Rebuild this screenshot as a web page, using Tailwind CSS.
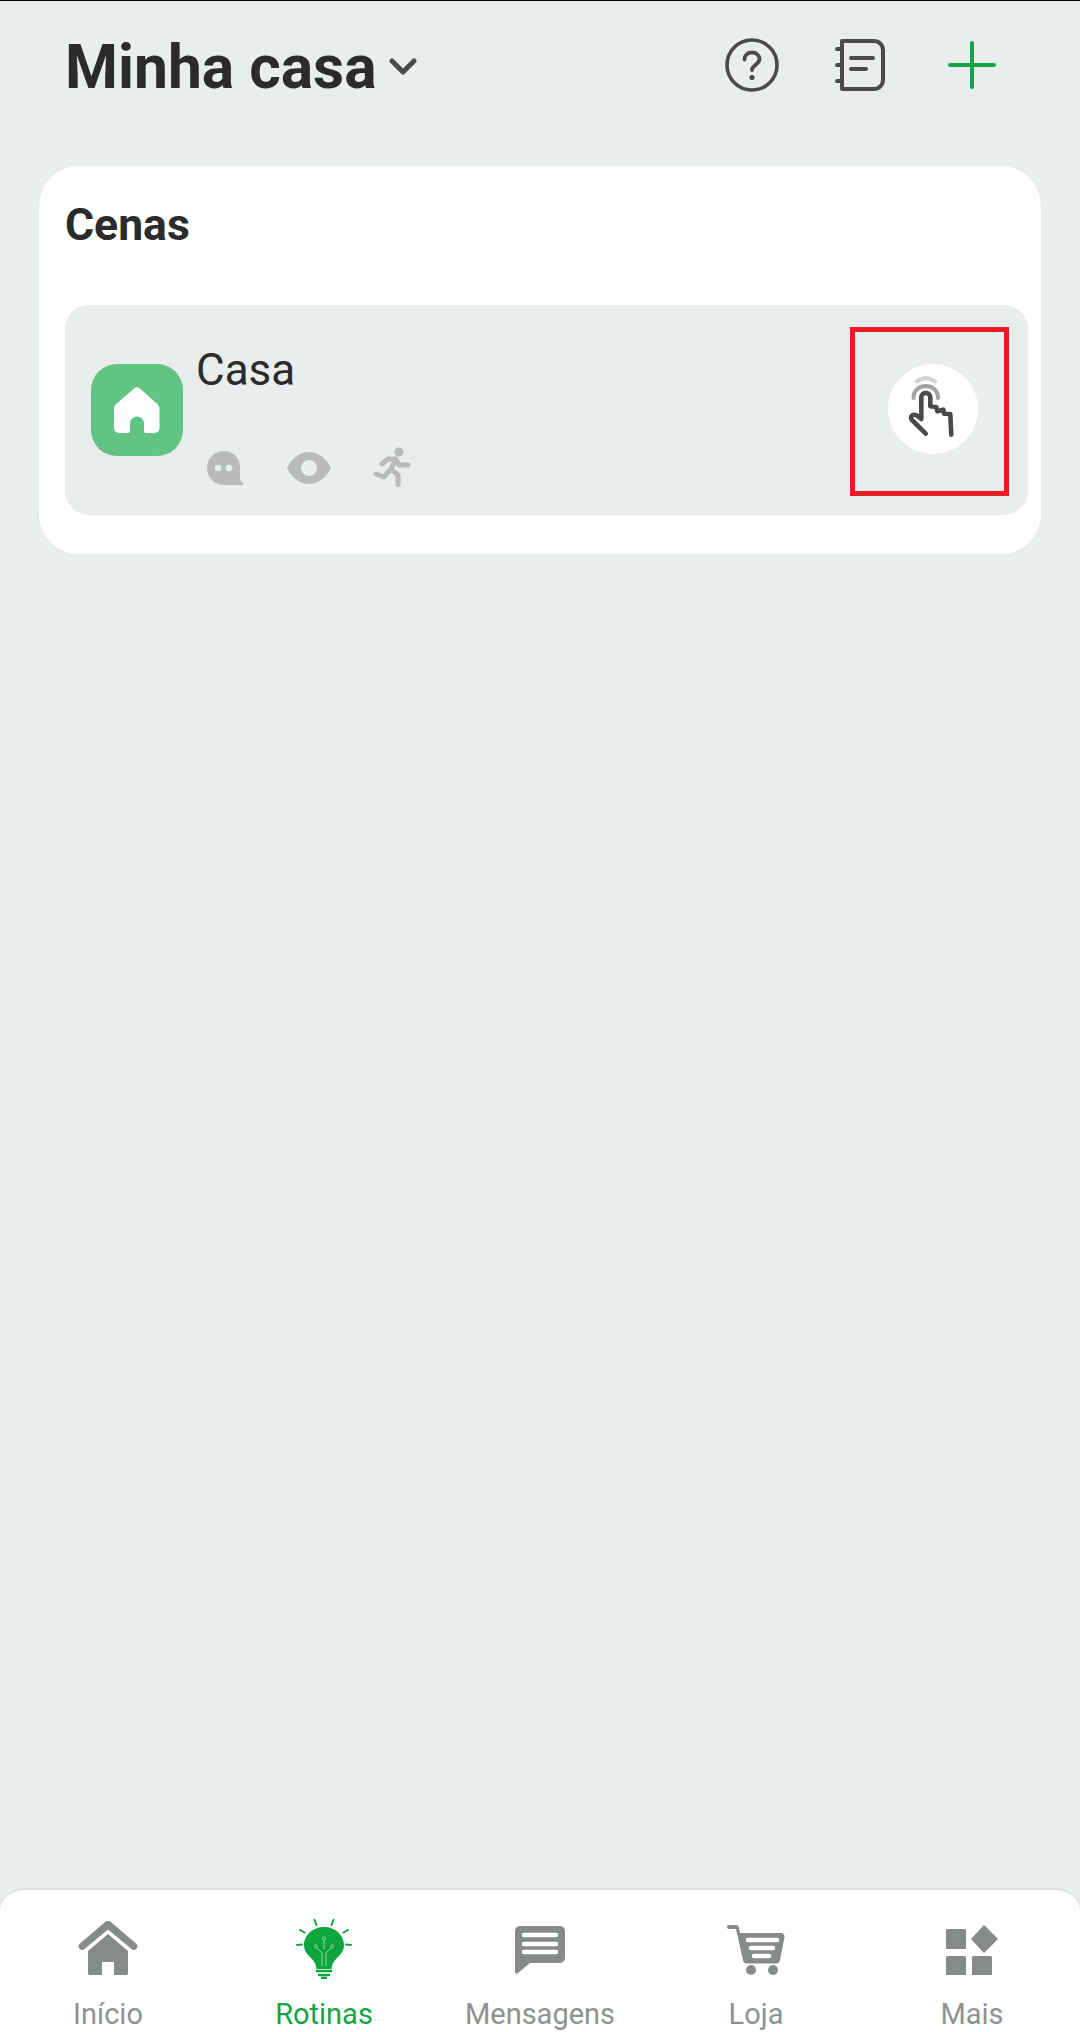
<!DOCTYPE html>
<html lang="pt">
<head>
  <meta charset="UTF-8">
  <title>Minha casa</title>
  <script src="https://cdn.jsdelivr.net/npm/@tailwindcss/browser@4"></script>
</head>
<body class="bg-[#e9edee] font-[Roboto,sans-serif] text-[#2b2b2b]">
  <div class="w-[1080px] h-[2032px] flex flex-col border-t border-black overflow-hidden">

    <!-- header -->
    <header class="h-[127px] shrink-0 flex items-center pl-[65px]">
      <h1 class="text-[60.5px] leading-[70px] font-bold pt-[6px]">Minha casa</h1>
      <svg class="ml-[12px] mt-[5px]" width="28" height="18" viewBox="0 0 28 18" fill="none" stroke="#484a4a" stroke-width="5" stroke-linecap="round" stroke-linejoin="round"><path d="M3 3l11 11L25 3"/></svg>
      <div class="ml-auto flex items-center">
        <svg class="mr-[55px]" width="56" height="56" viewBox="0 0 56 56" fill="none" stroke="#4a4a4a" stroke-width="3.6" stroke-linecap="round">
          <circle cx="28" cy="28" r="25"/>
          <path d="M20.5 22.5c0-4.2 3.3-7 7.5-7s7.5 2.8 7.5 6.600c0 5.600-7.500 5.900-7.500 11" stroke-width="3.8"/>
          <circle cx="28" cy="40.5" r="2.6" fill="#4a4a4a" stroke="none"/>
        </svg>
        <svg class="mr-[63px]" width="50" height="52" viewBox="0 0 50 52" fill="none" stroke="#4a4a4a" stroke-width="4" stroke-linecap="round" stroke-linejoin="round">
          <path d="M7 2h32a9 9 0 0 1 9 9v30a9 9 0 0 1-9 9H7z"/>
          <path d="M2 10h5M2 26h5M2 42h5M16 19h22M16 30h15"/>
        </svg>
        <svg class="mr-[84px]" width="48" height="48" viewBox="0 0 48 48" fill="none" stroke="#16a346" stroke-width="4" stroke-linecap="round"><path d="M24 2v44M2 24h44"/></svg>
      </div>
    </header>

    <!-- scenes card -->
    <section class="mt-[38px] ml-[39px] w-[1002px] h-[388px] bg-white rounded-[40px] pt-[34px] pl-[26px] pr-[13px] shrink-0">
      <h2 class="text-[44.5px] leading-[50px] font-bold">Cenas</h2>
      <div class="mt-[55px] h-[210px] bg-[#e9edee] rounded-[24px] flex items-center relative pl-[26px]">
        <div class="w-[92px] h-[92px] rounded-[26px] bg-[#62c484] flex items-center justify-center shrink-0 mt-[-1px]">
          <svg width="46" height="46" viewBox="0 0 46 46" fill="#fff"><path d="M20 1.600a4.400 4.400 0 0 1 6 0l17.500 15.600a6 6 0 0 1 2 4.500V41a5 5 0 0 1-5 5H32a2 2 0 0 1-2-2v-7.500a7 7 0 0 0-14 0V44a2 2 0 0 1-2 2H5a5 5 0 0 1-5-5V21.700a6 6 0 0 1 2-4.500z"/></svg>
        </div>
        <div class="ml-[13px] self-start pt-[39px]">
          <p class="text-[44px] leading-[52px] text-[#2b2b2b]">Casa</p>
          <div class="flex items-center mt-[53px] ml-[11px]">
            <svg width="36" height="34" viewBox="0 0 36 34" fill="#b9baba"><path d="M17 0c9.500 0 16 7 16 16v11c0 2 1 3.500 3 5 .5 1 0 2-1 2H17C7.500 34 0 26.500 0 17S7.500 0 17 0z"/><circle cx="11" cy="17" r="3.300" fill="#e9edee"/><circle cx="22" cy="17" r="3.300" fill="#e9edee"/></svg>
            <svg class="ml-[44px]" width="44" height="32" viewBox="0 0 44 32"><path d="M22 0c9 0 17 6 22 16-5 10-13 16-22 16S5 26 0 16C5 6 13 0 22 0z" fill="#b9baba"/><circle cx="22" cy="16" r="8" fill="#e9edee"/></svg>
            <svg class="ml-[42px] mt-[-2px]" width="38" height="40" viewBox="0 0 38 40" fill="none" stroke="#b9baba" stroke-width="5" stroke-linecap="round" stroke-linejoin="round">
              <circle cx="26" cy="5" r="4.500" fill="#b9baba" stroke="none"/>
              <path d="M9 17l6-5h8l-5 10 7 6v9.500M23 12l3 6h9M16 24l-5 6-8-3"/>
            </svg>
          </div>
        </div>
        <!-- highlight box -->
        <div class="absolute right-[19px] top-[22px] w-[159px] h-[169px] border-[5px] border-[#ed1c24] flex items-center justify-center">
          <div class="w-[90px] h-[90px] rounded-full bg-white ml-[7px] mb-[6px]">
            <svg width="90" height="90" viewBox="0 0 90 90" fill="none" stroke-linecap="round" stroke-linejoin="round">
              <path d="M29 17.500c5-4.500 13-4.500 18 0" stroke="#d0d0d0" stroke-width="4"/>
              <path d="M25.500 34c0-16 24.500-16 24.500 0" stroke="#a3a3a3" stroke-width="4"/>
              <path d="M37.700 69.700L24 56c-2-2.500-.5-5 1.500-5.200 1.500-.3 3 .3 4 1.200l3.800 3V33c0-5.300 9-5.300 9 0v9.300l6 .7 1 4.300 6-1.600.8 4 6.200.3 1 20.700" stroke="#4a4a4a" stroke-width="4.600"/>
            </svg>
          </div>
        </div>
      </div>
    </section>

    <div class="flex-1"></div>

    <!-- bottom nav -->
    <nav class="h-[144px] shrink-0 bg-white rounded-t-[24px] border-t-2 border-[#dcdfdf] grid grid-cols-5 text-[29px] leading-[32px] text-[#8f9291]">
      <a class="flex flex-col items-center">
        <div class="h-[99px] flex items-end justify-center pb-[14px]">
          <svg width="60" height="54" viewBox="0 0 60 54" fill="#868b88"><path d="M26.500 1.500a5 5 0 0 1 7 0l24.500 21a3.500 3.500 0 0 1-4.500 5.500L30 8.500 6.500 28A3.500 3.500 0 0 1 2 22.500z"/><path d="M30 13l20 17v22a2 2 0 0 1-2 2H36V41H24v13H12a2 2 0 0 1-2-2V30z"/></svg>
        </div>
        <span class="mt-[9px]">Início</span>
      </a>
      <a class="flex flex-col items-center text-[#16a346]">
        <div class="h-[99px] flex items-end justify-center pb-[10px]">
          <svg width="56" height="60" viewBox="0 0 56 60" fill="none">
            <path d="M28 8c11 0 20 8 20 18 0 6-3 9-7 13-3 3-5 6-5.500 11h-15c-.5-5-2.500-8-5.500-11-4-4-7-7-7-13 0-10 9-18 20-18z" fill="#0fa53e"/>
            <path d="M21 52h14M23 56h10M26 59h4" stroke="#0fa53e" stroke-width="2.400" stroke-linecap="round"/>
            <path d="M18.500 1l2 5M37.500 1l-2 5M4 11l4.500 2.500M52 11l-4.500 2.500M1 26l5-.6M55 26l-5-.6" stroke="#0fa53e" stroke-width="2" stroke-linecap="round"/>
            <path d="M26 47V34l-5-5M30 47V34l5-5M28 30V21" stroke="#8fd6a6" stroke-width="1"/>
            <circle cx="28" cy="19.500" r="1.500" stroke="#8fd6a6" stroke-width="1"/><circle cx="20" cy="27.500" r="1.500" stroke="#8fd6a6" stroke-width="1"/><circle cx="36" cy="27.500" r="1.500" stroke="#8fd6a6" stroke-width="1"/>
          </svg>
        </div>
        <span class="mt-[9px]">Rotinas</span>
      </a>
      <a class="flex flex-col items-center">
        <div class="h-[99px] flex items-end justify-center pb-[15px]">
          <svg width="50" height="48" viewBox="0 0 50 48" fill="#868b88"><path d="M5 0h40a5 5 0 0 1 5 5v27a5 5 0 0 1-5 5H15L3 47c-1.500 1.500-3 .5-3-1V5a5 5 0 0 1 5-5z"/><path d="M9 9h32M9 18h32M9 26h32" stroke="#fff" stroke-width="4.500" stroke-linecap="round"/></svg>
        </div>
        <span class="mt-[9px]">Mensagens</span>
      </a>
      <a class="flex flex-col items-center">
        <div class="h-[99px] flex items-end justify-center pb-[14px]">
          <svg width="58" height="50" viewBox="0 0 58 50" fill="#868b88"><path d="M2 0h7a3 3 0 0 1 3 2.500L13 8h41a3.500 3.500 0 0 1 3.500 4l-4.500 23a4 4 0 0 1-4 3.500H20a4 4 0 0 1-4-3.500L9 4H2a2 2 0 0 1 0-4z"/><ellipse cx="24" cy="45" rx="5" ry="5"/><ellipse cx="46" cy="45" rx="5" ry="5"/><path d="M21 15h29M24 23h22M27 31h15" stroke="#fff" stroke-width="4.500" stroke-linecap="round"/></svg>
        </div>
        <span class="mt-[9px]">Loja</span>
      </a>
      <a class="flex flex-col items-center">
        <div class="h-[99px] flex items-end justify-center pb-[14px]">
          <svg width="52" height="50" viewBox="0 0 52 50" fill="#868b88"><rect x="0" y="4" width="20" height="20" rx="1.500"/><path d="M38 0l14 14-14 14-13-14z"/><rect x="0" y="31" width="20" height="20" rx="1.500"/><rect x="26" y="31" width="20" height="20" rx="1.500"/></svg>
        </div>
        <span class="mt-[9px]">Mais</span>
      </a>
    </nav>
  </div>
</body>
</html>
